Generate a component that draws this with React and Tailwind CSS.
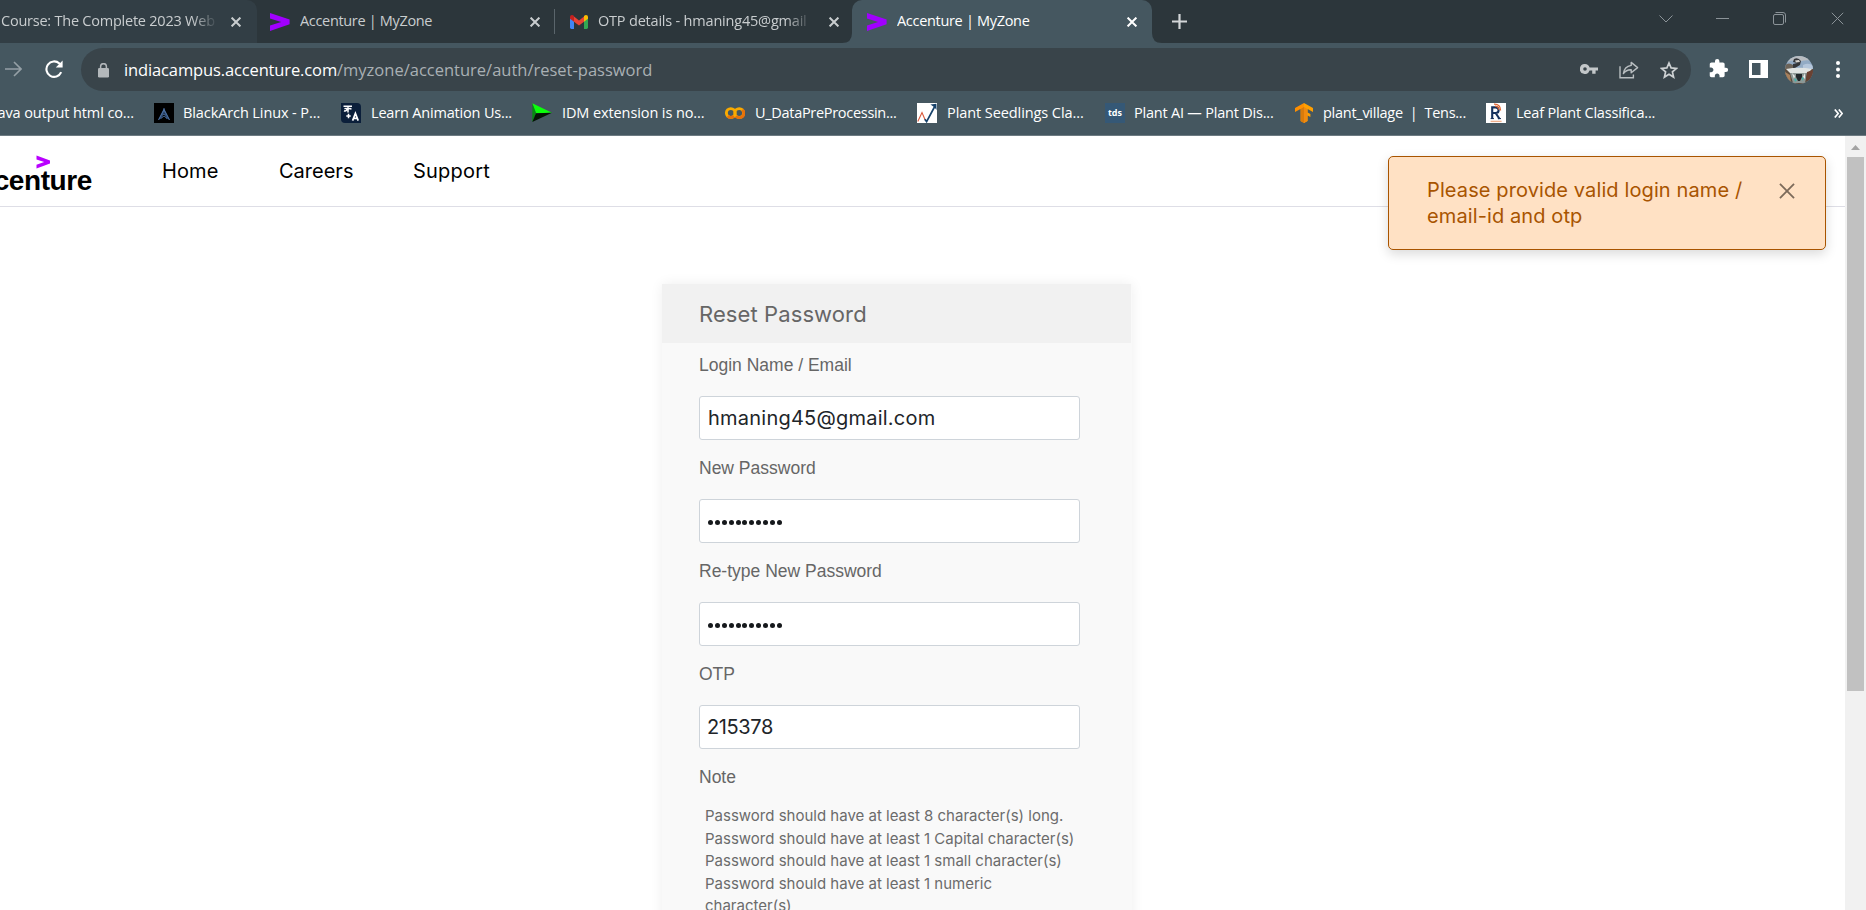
import React from "react";

const Swoosh = () => (
  <svg width="20" height="20" viewBox="0 0 20 20" className="shrink-0">
    <path d="M0 1 L19.6 7.6 V12.2 L0 19 V13.6 L11.2 9.9 L0 6.4 Z" fill="#a100ff" />
  </svg>
);

const Gmail = () => (
  <svg width="18" height="14" viewBox="0 0 18 14" className="shrink-0">
    <path d="M0 2V12.6Q0 14 1.4 14H4V5.5Z" fill="#4285f4" />
    <path d="M18 2V12.6Q18 14 16.6 14H14V5.5Z" fill="#34a853" />
    <path d="M4 1.6L9 5.4L14 1.6V6.8L9 10.6L4 6.8Z" fill="#ea4335" />
    <path d="M0 2Q0 0 2 0Q3 0 4 1V6.8L0 3.8Z" fill="#c5221f" />
    <path d="M18 2Q18 0 16 0Q15 0 14 1V6.8L18 3.8Z" fill="#fbbc04" />
  </svg>
);

const Cross = ({ size = 10, stroke = 2, color = "currentColor" }) => (
  <svg width={size} height={size} viewBox="0 0 10 10" className="shrink-0">
    <path d="M0.6 0.6L9.4 9.4M9.4 0.6L0.6 9.4" stroke={color} strokeWidth={(stroke * 10) / size} fill="none" />
  </svg>
);

function Tab({ icon, title, titleClass, className }) {
  return (
    <div className={"flex h-[43px] shrink-0 items-center " + className}>
      {icon}
      <span className={"overflow-hidden whitespace-nowrap pb-px text-[14.5px] leading-5 " + titleClass}>{title}</span>
      <Cross />
    </div>
  );
}

const BlackArch = () => (
  <svg width="20" height="20" viewBox="0 0 20 20">
    <rect width="20" height="20" fill="#000" />
    <path d="M10 5L4 17L7.6 15.4L10 10L12.4 15.4L16 17Z" fill="#2d4a73" />
    <path d="M10 5V9M4.5 17L10 6.5L15.5 17M7.5 15L10 13L13 15.5M8.5 11L11.5 12" stroke="#5478ab" strokeWidth="0.8" fill="none" />
  </svg>
);

const Translate = () => (
  <svg width="20" height="20" viewBox="0 0 20 20">
    <path d="M0 0H16Q20 0 20 4V20H4Q0 20 0 16Z" fill="#0b1f3a" />
    <path d="M2.5 3.2H11M7 3.2V9.5M3.5 5.8Q6.2 4.6 5.8 6.8Q5 8.6 3 7.8M7 6.2Q9 4.6 10.4 6.4M7.5 10.8V15.2M5.3 13H9.7" stroke="#fff" strokeWidth="1.5" fill="none" />
    <path d="M11.6 17.6L14.4 10.4L17.2 17.6M12.6 15.3H16.2" stroke="#fff" strokeWidth="1.7" fill="none" />
  </svg>
);

const Idm = () => (
  <svg width="20" height="20" viewBox="0 0 20 20">
    <path d="M0.3 0.3L20 9.8L4 10.2Z" fill="#0cff0c" />
    <path d="M0.3 0.3L4 10.2L0.3 19Z" fill="#078a12" />
    <path d="M4 10.2L20 9.8L0.3 19Z" fill="#051405" />
  </svg>
);

const Colab = () => (
  <svg width="20" height="20" viewBox="0 0 20 20">
    <circle cx="5.8" cy="10" r="4.4" fill="none" stroke="#f9ab00" strokeWidth="2.9" />
    <path d="M2.7 13.1A4.4 4.4 0 0 0 8.9 13.1" fill="none" stroke="#e8710a" strokeWidth="2.9" />
    <circle cx="14.2" cy="10" r="4.4" fill="none" stroke="#f9ab00" strokeWidth="2.9" />
    <path d="M11.1 13.1A4.4 4.4 0 1 0 17.3 6.9" fill="none" stroke="#e8710a" strokeWidth="2.9" />
  </svg>
);

const Seedlings = () => (
  <svg width="20" height="20" viewBox="0 0 20 20">
    <rect width="20" height="20" fill="#fff" />
    <path d="M0.8 18.5L5 9.5L8.2 17" stroke="#d9583b" strokeWidth="1.1" fill="none" />
    <path d="M7.8 16.2L9.6 18.6L18 3" stroke="#16426b" strokeWidth="1.7" fill="none" />
    <path d="M13.4 1.6L19.4 0.8L19.6 7L17.4 4.2Z" fill="#16426b" />
  </svg>
);

const Tds = () => (
  <span className="flex h-5 w-5 items-center justify-center bg-[#355876] pb-px font-['Open_Sans',sans-serif] text-[9px] font-bold leading-none text-white">tds</span>
);

const TensorFlow = () => (
  <svg width="18" height="20" viewBox="0 0 18 20">
    <path d="M9 0L0 5V9L5.5 6V18L9 20Z" fill="#ff8f00" />
    <path d="M9 0L18 5V9L12.6 6V9.4L15.4 11V14L12.6 12.6V18L9 20Z" fill="#ffa000" />
    <path d="M6 5.8L9 4V20L6 18.2Z" fill="#d97b0b" />
    <path d="M9 4L12.4 6V18L9 20Z" fill="#f08a10" />
  </svg>
);

const Research = () => (
  <svg width="20" height="20" viewBox="0 0 20 20">
    <rect width="20" height="20" fill="#fff" />
    <path d="M6.2 16V4.4H9.6Q12.6 4.4 12.6 7.2Q12.6 10 9.6 10H6.4M9.6 10L13.6 16" stroke="#14305c" strokeWidth="2.1" fill="none" />
    <path d="M4.6 15.6H8M11.8 15.6H15" stroke="#14305c" strokeWidth="1" />
    <path d="M8 1.2Q14.4 1 14.6 7.4M9 3.2Q12.4 3.2 12.6 6.6" stroke="#e0642f" strokeWidth="1.2" fill="none" />
    <path d="M4.6 18.4H15.6" stroke="#f0b08c" strokeWidth="1.4" />
  </svg>
);

const bookmarks = [
  { icon: <BlackArch />, slot: "w-[187px]", text: "BlackArch Linux - P...", cls: "ml-[9px] tracking-[-0.1px]" },
  { icon: <Translate />, slot: "w-[191px]", text: "Learn Animation Us...", cls: "ml-[10px] tracking-[-0.18px]" },
  { icon: <Idm />, slot: "w-[193px]", text: "IDM extension is no...", cls: "ml-[10px] tracking-[-0.1px]" },
  { icon: <Colab />, slot: "w-[192px]", text: "U_DataPreProcessin...", cls: "ml-[10px] tracking-[-0.3px]" },
  { icon: <Seedlings />, slot: "w-[188px]", text: "Plant Seedlings Cla...", cls: "ml-[10px] tracking-[-0.08px]" },
  { icon: <Tds />, slot: "w-[190px]", text: "Plant AI — Plant Dis...", cls: "ml-[9px] tracking-[-0.21px]" },
  { icon: <TensorFlow />, slot: "w-[191px]", text: "plant_village  |  Tens...", cls: "ml-[10px] whitespace-pre tracking-[-0.27px]" },
  { icon: <Research />, slot: "w-[190px]", text: "Leaf Plant Classifica...", cls: "ml-[10px] tracking-[-0.2px]" },
];

const Avatar = () => (
  <svg width="28" height="28" viewBox="0 0 28 28">
    <defs>
      <clipPath id="avatarClip"><circle cx="14" cy="14" r="14" /></clipPath>
    </defs>
    <g clipPath="url(#avatarClip)">
      <rect width="28" height="28" fill="#93abc4" />
      <path d="M0 0H28V5Q20 3 14 6Q6 2 0 8Z" fill="#b9bdc1" />
      <path d="M0 9Q4 6 8 9L10 14H0Z" fill="#6d6459" />
      <path d="M18 9Q24 6 28 10V15H18Z" fill="#b4c6da" />
      <path d="M9 3Q13 1 16 5L15 9L10 12H8V8L12 7L8 6Z" fill="#34363a" />
      <path d="M10 4.5L14 4L15 6L11 6.5Z" fill="#d8d5d0" />
      <rect y="13" width="28" height="15" fill="#5a4a3c" />
      <path d="M1 13Q14 10.5 27 13L23 17H5Z" fill="#dfe3e2" />
      <path d="M5 17H22L20 27H8Z" fill="#8d9896" />
      <path d="M7 17L10 20L9 23ZM20 17L18 21L20 23Z" fill="#e6eae9" />
      <path d="M9 22L12 24L10 26ZM17 21L19 22L17 25Z" fill="#3fb3ad" />
      <path d="M11 18H17V21L15 25H13L11 21Z" fill="#22282b" />
      <path d="M22 16L28 14V26L21 24Z" fill="#6b4132" />
      <path d="M0 16L5 19L6 26L0 24Z" fill="#a8805c" />
    </g>
  </svg>
);

function Field({ label, value, valueClass }) {
  return (
    <div className="h-[103px]">
      <div className="h-[53px] pt-[10px] font-['Liberation_Sans',Arial,sans-serif] text-[17.5px] leading-6 text-[#666]">{label}</div>
      <div className="flex h-[44px] w-[381px] items-center rounded-[3px] border border-[#ced4da] bg-white px-2 text-[20px] text-[#212529]">
        {value ? (
          <span className={valueClass}>{value}</span>
        ) : (
          <span className="mt-[3px] flex gap-[1.9px]">
            {Array.from({ length: 11 }, (_, i) => (
              <i key={i} className="h-[5px] w-[5px] rounded-full bg-[#16191c]" />
            ))}
          </span>
        )}
      </div>
    </div>
  );
}

export default function App() {
  return (
    <div className="flex h-[910px] w-[1866px] flex-col overflow-hidden bg-white font-['Open_Sans','Noto_Sans',sans-serif]">
      {/* Tab strip */}
      <div className="bg-[#455760]">
        <div className="flex h-[43px] bg-[#2c363b] text-[#c9cdcf]">
          <Tab
            className="w-[257px] rounded-tr-[10px] bg-[#323e45]"
            title="Course: The Complete 2023 Web"
            titleClass="ml-px mr-[13px] w-[217px] tracking-[-0.23px] [mask-image:linear-gradient(to_right,#000_88%,transparent_100%)]"
          />
          <Tab className="w-[297px] pl-[13px]" icon={<Swoosh />} title="Accenture | MyZone" titleClass="ml-[10px] mr-[14px] w-[216px] tracking-[-0.33px]" />
          <div className="mt-[9px] h-[25px] w-px bg-[#5a656b]" />
          <Tab
            className="w-[297px] pl-[15px]"
            icon={<Gmail />}
            title="OTP details - hmaning45@gmail"
            titleClass="ml-[10px] mr-[17px] w-[214px] tracking-[-0.2px] [mask-image:linear-gradient(to_right,#000_88%,transparent_100%)]"
          />
          <div className="relative">
            <Tab className="w-[300px] rounded-t-[10px] bg-[#455760] pl-[15px] text-white" icon={<Swoosh />} title="Accenture | MyZone" titleClass="ml-[10px] mr-[17px] w-[213px] tracking-[-0.31px]" />
            <svg width="10" height="10" viewBox="0 0 10 10" className="absolute -left-[10px] bottom-0"><path d="M10 0Q10 10 0 10H10Z" fill="#455760" /></svg>
            <svg width="10" height="10" viewBox="0 0 10 10" className="absolute -right-[10px] bottom-0"><path d="M0 0Q0 10 10 10H0Z" fill="#455760" /></svg>
          </div>
          <svg width="15" height="15" viewBox="0 0 15 15" className="ml-[20px] mt-[14px]"><path d="M7.5 0V15M0 7.5H15" stroke="#d3d6d8" strokeWidth="2.2" /></svg>
          <div className="ml-auto mr-[22px] flex h-[37px] items-center">
            <svg width="14" height="8" viewBox="0 0 14 8"><path d="M0.5 0.5L7 7L13.5 0.5" stroke="#8b9398" fill="none" /></svg>
            <svg width="13" height="13" viewBox="0 0 13 13" className="ml-[43px]"><path d="M0 6.5H13" stroke="#8b9398" /></svg>
            <svg width="13" height="13" viewBox="0 0 13 13" className="ml-[44px]"><rect x="0.5" y="2.5" width="10" height="10" rx="1.5" fill="none" stroke="#8b9398" /><path d="M2.5 0.5H10Q12.5 0.5 12.5 3V10.5" fill="none" stroke="#8b9398" /></svg>
            <span className="ml-[45px]"><Cross size={13} stroke={1} color="#8b9398" /></span>
          </div>
        </div>
      </div>

      {/* Toolbar and bookmarks */}
      <div className="flex h-[93px] flex-col border-b border-[#6d7b82] bg-[#455760] pt-[5px]">
        <div className="flex h-[43px] items-center">
          <svg width="17" height="16" viewBox="0 0 17 16" className="-mt-[2px] ml-[5px]"><path d="M0 8H15.5M9 1L16 8L9 15" stroke="#95a0a6" strokeWidth="1.6" fill="none" /></svg>
          <svg width="19" height="18" viewBox="0 0 19 18" className="-mt-px ml-[23px]">
            <path d="M16.2 12.2A7.7 7.7 0 1 1 14.4 3.5L16.4 5.4" stroke="#fff" strokeWidth="2.1" fill="none" />
            <path d="M17.6 0.6V7.4H10.8Z" fill="#fff" />
          </svg>
          <div className="ml-[17px] flex h-[43px] w-[1610px] items-center rounded-full bg-[#39444a] pl-[17px] pr-[13px]">
            <svg width="11" height="15" viewBox="0 0 11 15" className="mt-px"><rect y="5" width="11" height="9.5" rx="1.3" fill="#b3b8bb" /><path d="M2.6 6V3.6A2.9 2.9 0 0 1 8.4 3.6V6" stroke="#b3b8bb" strokeWidth="1.5" fill="none" /></svg>
            <div className="ml-[15px] flex whitespace-nowrap text-[16.5px] leading-6">
              <span className="tracking-[-0.13px] text-white">indiacampus.accenture.com</span>
              <span className="text-[#a9b0b4]">/myzone/accenture/auth/reset-password</span>
            </div>
            <div className="ml-auto flex items-center">
              <svg width="18" height="10" viewBox="0 0 18 10" className="-mt-px"><path fillRule="evenodd" d="M5 0A5 5 0 1 0 9.6 6.6H12.2V9.8H15.6V6.6H18V3.4H9.6A5 5 0 0 0 5 0ZM5 3.2A1.8 1.8 0 1 1 5 6.8A1.8 1.8 0 1 1 5 3.2Z" fill="#c3c7c9" /></svg>
              <svg width="20" height="18" viewBox="0 0 20 18" className="ml-[21px]">
                <path d="M1 5.2V16.8H14.4V13.6" stroke="#b9bec1" strokeWidth="1.4" fill="none" />
                <path d="M12.2 1.4L18.6 6.6L12.2 11.8V8.8Q7.2 8.6 4.4 12.6Q5.2 5.6 12.2 4.4Z" stroke="#b9bec1" strokeWidth="1.4" fill="none" strokeLinejoin="round" />
              </svg>
              <svg width="18" height="18" viewBox="0 0 18 18" className="ml-[21px]"><path d="M9 2L11.1 6.9L16.4 7.4L12.4 10.9L13.6 16.1L9 13.3L4.4 16.1L5.6 10.9L1.6 7.4L6.9 6.9Z" stroke="#cdd1d3" strokeWidth="1.7" fill="none" /></svg>
            </div>
          </div>
          <svg width="21" height="21" viewBox="0 0 24 24" className="-mt-[2px] ml-[17px]"><path fill="#fff" d="M20.5 11H19V7c0-1.1-.9-2-2-2h-4V3.5a2.5 2.5 0 0 0-5 0V5H4c-1.1 0-1.99.9-1.99 2v3.8H3.5c1.49 0 2.7 1.21 2.7 2.7s-1.21 2.7-2.7 2.7H2V20c0 1.1.9 2 2 2h3.8v-1.5c0-1.49 1.21-2.7 2.7-2.7s2.7 1.21 2.7 2.7V22H17c1.1 0 2-.9 2-2v-4h1.5a2.5 2.5 0 0 0 0-5z" /></svg>
          <svg width="19" height="18" viewBox="0 0 19 18" className="-mt-px ml-[20px]"><path fillRule="evenodd" d="M0 0H19V18H0ZM3 3V15H11.5V3Z" fill="#fff" /></svg>
          <span className="ml-[17px]"><Avatar /></span>
          <svg width="4" height="17" viewBox="0 0 4 17" className="-mt-px ml-[23px]"><circle cx="2" cy="2" r="2" fill="#fff" /><circle cx="2" cy="8.5" r="2" fill="#fff" /><circle cx="2" cy="15" r="2" fill="#fff" /></svg>
        </div>
        <div className="flex h-[44px] items-center text-[14.5px] leading-5 text-white">
          <div className="flex w-[154px] shrink-0 justify-end pr-[20px]">
            <span className="whitespace-nowrap tracking-[-0.1px]">Java output html co...</span>
          </div>
          {bookmarks.map((b) => (
            <div key={b.text} className={"flex shrink-0 items-center whitespace-nowrap " + b.slot}>
              {b.icon}
              <span className={"pb-px " + b.cls}>{b.text}</span>
            </div>
          ))}
          <svg width="9" height="9" viewBox="0 0 9 9" className="ml-auto mr-[23px]"><path d="M0.8 0.5L4.2 4.5L0.8 8.5M4.8 0.5L8.2 4.5L4.8 8.5" stroke="#fff" strokeWidth="1.7" fill="none" /></svg>
        </div>
      </div>

      {/* Page */}
      <div className="flex min-h-0 flex-1 font-['Inter','Open_Sans',sans-serif]">
        <main className="relative flex-1 overflow-hidden">
          <header className="flex h-[71px] items-center border-b border-[#dedee6]">
            <div className="relative flex h-full w-[92px] items-end justify-end overflow-hidden">
              <span className="mb-[9px] font-['Liberation_Sans',Arial,sans-serif] text-[28px] font-bold leading-8 tracking-[-0.4px] text-black">accenture</span>
              <svg width="14" height="14" viewBox="0 0 14 14" className="absolute left-[36px] top-[19px]"><path d="M0.5 0.5L14 5.4V8.6L0.5 13.5V9.8L8.2 7L0.5 4.4Z" fill="#b900ff" /></svg>
            </div>
            <nav className="flex pl-[70px] text-[20px] leading-7 text-black">
              <span className="w-[117px] tracking-[0.1px]">Home</span>
              <span className="w-[134px]">Careers</span>
              <span className="tracking-[0.2px]">Support</span>
            </nav>
          </header>

          <section className="ml-[662px] mt-[77px] h-[700px] w-[470px] bg-[#f9f9f9] shadow-[0_0_12px_rgba(0,0,0,0.07)]">
            <h1 className="mr-px flex h-[59px] items-center bg-[#f1f1f1] pl-[37px] text-[22px] tracking-[0.1px] text-[#666]">
              <span className="pt-[2px]">Reset Password</span>
            </h1>
            <div className="pl-[37px]">
              <Field label="Login Name / Email" value="hmaning45@gmail.com" valueClass="tracking-[0.23px]" />
              <Field label="New Password" />
              <Field label="Re-type New Password" />
              <Field label="OTP" value="215378" valueClass="tracking-[-0.4px] -ml-px" />
              <div className="h-[50px] pt-[10px] font-['Liberation_Sans',Arial,sans-serif] text-[17.5px] leading-6 text-[#666]">Note</div>
              <div className="pl-[6px] text-[15px] leading-[22.5px] text-[#6b6b6b]">
                <div>Password should have at least 8 character(s) long.</div>
                <div>Password should have at least 1 Capital character(s)</div>
                <div>Password should have at least 1 small character(s)</div>
                <div>Password should have at least 1 numeric</div>
                <div>character(s)</div>
              </div>
            </div>
          </section>

          <div className="absolute left-[1388px] top-[20px] flex h-[94px] w-[438px] items-start rounded-[5px] border border-[#a85400] bg-[#ffe1c4] pl-[38px] pt-[20px] shadow-[0_4px_12px_rgba(0,0,0,0.15)]">
            <p className="w-[352px] text-[20px] leading-[26px] tracking-[0.11px] text-[#a85400]">
              Please provide valid login name /<br />email-id and otp
            </p>
            <span className="mt-[6px]"><Cross size={16} stroke={1.8} color="#7c6a5a" /></span>
          </div>
        </main>
        <aside className="flex w-[21px] flex-col items-center bg-[#f1f1f1] pt-[9px]">
          <svg width="9" height="5" viewBox="0 0 9 5"><path d="M4.5 0L9 5H0Z" fill="#a3a3a3" /></svg>
          <div className="mt-[7px] h-[534px] w-[17px] bg-[#c1c1c1]" />
        </aside>
      </div>
    </div>
  );
}
